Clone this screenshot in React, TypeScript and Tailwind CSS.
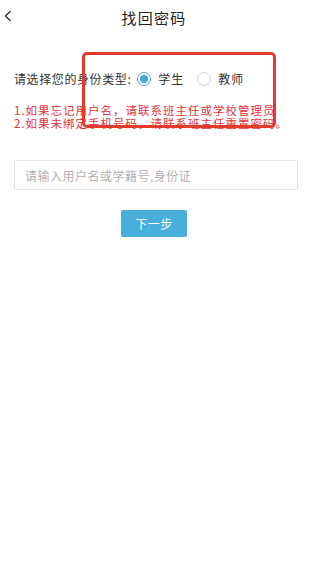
import { useState } from 'react';

const font = { fontFamily: '"Noto Sans CJK SC", "Noto Sans", sans-serif' };

function Radio({ checked, label, onClick }: { checked: boolean; label: string; onClick: () => void }) {
  return (
    <button type="button" onClick={onClick} className="flex items-center">
      <span
        className={`flex h-[14px] w-[14px] items-center justify-center rounded-full border ${
          checked ? 'border-[#4aa8dc]' : 'border-[#d4d4d4]'
        }`}
      >
        {checked && <span className="h-[8px] w-[8px] rounded-full bg-[#4aa8dc]" />}
      </span>
      <span className="ml-[7px] text-[12px] tracking-[1px] leading-none text-[#333]">{label}</span>
    </button>
  );
}

export default function App() {
  const [role, setRole] = useState<'student' | 'teacher'>('student');
  const [account, setAccount] = useState('');

  return (
    <div className="relative h-[565px] w-[308px] bg-white" style={font}>
      <header className="relative flex h-[34px] items-center justify-center">
        <button type="button" className="absolute left-[3px] top-[9px] p-[1px]">
          <svg width="8" height="12" viewBox="0 0 8 12" fill="none">
            <path d="M6.5 1 L1.5 6 L6.5 11" stroke="#333" strokeWidth="1.4" />
          </svg>
        </button>
        <h1 className="text-[15px] leading-none text-[#222] tracking-[1.2px]">找回密码</h1>
      </header>

      <div className="px-[14px]">
        <div className="mt-[37px] flex h-[16px] items-center">
          <span className="text-[12px] tracking-[0.6px] leading-none text-[#333]">请选择您的身份类型:</span>
          <div className="ml-[6px]">
            <Radio checked={role === 'student'} label="学生" onClick={() => setRole('student')} />
          </div>
          <div className="ml-[13px]">
            <Radio checked={role === 'teacher'} label="教师" onClick={() => setRole('teacher')} />
          </div>
        </div>

        <div className="mt-[17px] text-[11.5px] tracking-[1px] leading-[13px] text-[#e2333b] whitespace-nowrap">
          <p>1.如果忘记用户名，请联系班主任或学校管理员</p>
          <p>2.如果未绑定手机号码，请联系班主任重置密码。</p>
        </div>

        <input
          value={account}
          onChange={(e) => setAccount(e.target.value)}
          placeholder="请输入用户名或学籍号,身份证"
          className="mt-[30px] block h-[30px] w-[284px] rounded-[2px] border border-[#e3e3e3] px-[10px] text-[12px] tracking-[0.5px] text-[#333] outline-none placeholder:text-[#b0b0b0]"
        />

        <div className="mt-[20px] flex justify-center">
          <button
            type="button"
            className="h-[27px] w-[66px] rounded-[2px] bg-[#4aaedc] text-[12px] tracking-[0.5px] text-white"
          >
            下一步
          </button>
        </div>
      </div>

      {/* annotation box drawn over the screenshot */}
      <div className="pointer-events-none absolute left-[82px] top-[52px] h-[76px] w-[194px] rounded-[5px] border-[3px] border-[#e33a2c]" />
    </div>
  );
}
